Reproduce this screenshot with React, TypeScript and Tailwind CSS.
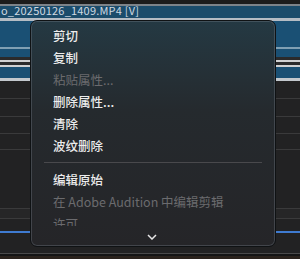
const items = [
  { label: '剪切' },
  { label: '复制' },
  { label: '粘贴属性...', disabled: true },
  { label: '删除属性...' },
  { label: '清除' },
  { label: '波纹删除' },
]

const items2 = [
  { label: '编辑原始' },
  { label: '在 Adobe Audition 中编辑剪辑', disabled: true },
  { label: '许可', disabled: true },
]

const MenuItem = ({ label, disabled }: { label: string; disabled?: boolean }) => (
  <div
    className={`flex h-[22px] shrink-0 items-center pl-[22px] text-[12.5px] leading-none ${
      disabled ? 'text-[#6b6b6e]' : 'font-medium text-[#ececec]'
    }`}
  >
    {label}
  </div>
)

export default function App() {
  return (
    <div
      className="relative h-[259px] w-[300px] overflow-hidden bg-[#222223]"
      style={{ fontFamily: '"Noto Sans CJK SC", "Noto Sans", sans-serif' }}
    >
      {/* timeline background */}
      <div className="h-[4px] bg-[#1c1c1c]" />
      <div className="h-[2px] bg-[#7d8389]" />
      <div className="flex h-[12px] items-center bg-[#1b4c6b] pb-[3px] pl-px text-[11px] leading-none whitespace-nowrap text-[#cfd9e2]">
        <span className="tracking-[0.2px]">o_20250126_1409.MP4 [V]</span>
      </div>
      <div className="h-[3px] bg-[#b4bcc4]" />
      <div className="h-[26px] bg-[#1a5074]" />
      <div className="h-[2px] bg-[#7f9fb3]" />
      <div className="h-[8px] bg-[#1a5074]" />
      <div className="h-[3px] bg-[#2a2a2b]" />
      <div className="h-[2px] bg-[#cfd0d1]" />
      <div className="h-[3px] bg-[#2a2a2b]" />
      <div className="h-[2px] bg-[#cfd0d1]" />
      <div className="h-[11px] bg-[#1a5074]" />
      <div className="h-[3px] bg-[#c3c9ce]" />
      <div className="h-[17px] bg-[#222223]" />
      <div className="h-px bg-[#3a3a3b]" />
      <div className="h-[17px] bg-[#222223]" />
      <div className="h-px bg-[#3a3a3b]" />
      <div className="h-[16px] bg-[#222223]" />
      <div className="h-px bg-[#3a3a3b]" />
      <div className="h-[15px] bg-[#222223]" />
      <div className="h-px bg-[#3a3a3b]" />
      <div className="h-[58px] bg-[#222223]" />
      <div className="h-px bg-[#3a3a3b]" />
      <div className="h-[9px] bg-[#262627]" />
      <div className="h-px bg-[#3a3a3b]" />
      <div className="h-[12px] bg-[#222223]" />
      <div className="h-[2px] bg-[#3f7bd0]" />
      <div className="h-[20px] bg-[#222223]" />
      <div className="h-px bg-[#4a4a4b]" />
      <div className="h-[2px] bg-[#151515]" />
      <div className="h-[4px] bg-[#2a221c]" />

      {/* context menu */}
      <div className="absolute top-[20px] left-[30px] h-[227px] w-[246px] rounded-[7px] border border-[#0f1214] bg-gradient-to-b from-[#243943] via-[#252a2e] via-40% to-[#252528] shadow-[inset_0_0_0_1px_rgba(120,130,140,0.35)]">
        <div className="flex h-[205px] flex-col overflow-hidden pt-[4px]">
          {items.map((item) => (
            <MenuItem key={item.label} {...item} />
          ))}
          <div className="mx-[13px] mt-[5px] mb-[6px] h-px shrink-0 bg-[#49494c]" />
          {items2.map((item) => (
            <MenuItem key={item.label} {...item} />
          ))}
        </div>
        <div className="flex justify-center">
          <svg width="10" height="6" viewBox="0 0 10 6" className="mt-[8px] ml-[-2px]">
            <path d="M1 1 L5 5 L9 1" fill="none" stroke="#e6e6e6" strokeWidth="1.5" />
          </svg>
        </div>
      </div>
    </div>
  )
}
